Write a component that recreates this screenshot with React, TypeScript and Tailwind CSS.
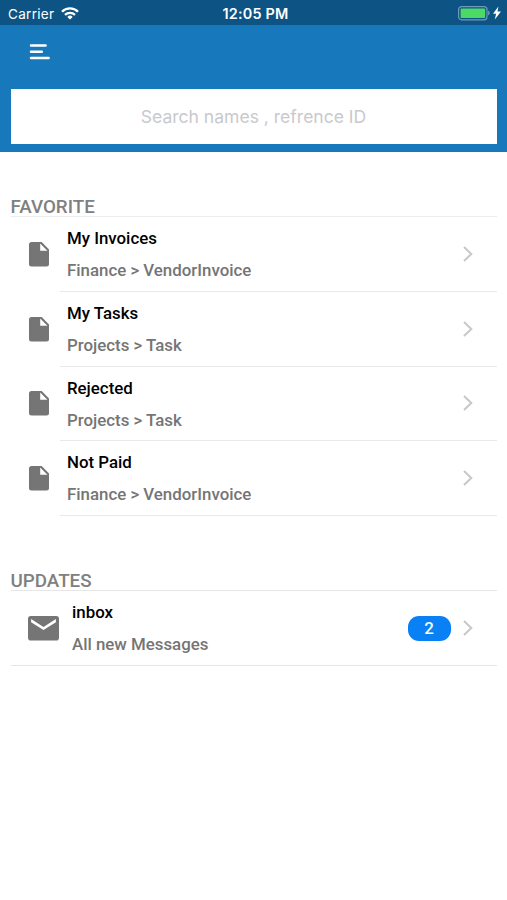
import { FC, ReactNode } from "react";

type Favorite = {
    title: string;
    path: string;
};

const favorites: Favorite[] = [
    { title: "My Invoices", path: "Finance > VendorInvoice" },
    { title: "My Tasks", path: "Projects > Task" },
    { title: "Rejected", path: "Projects > Task" },
    { title: "Not Paid", path: "Finance > VendorInvoice" },
];

const WifiIcon: FC = () => (
    <svg width="18" height="13" viewBox="0 0 18 13" fill="none" stroke="white" strokeWidth="2.3">
        <path d="M1 4.7a11.3 11.3 0 0 1 16 0" />
        <path d="M4 7.9a7.1 7.1 0 0 1 10 0" />
        <path d="M9 12.6 6.3 9.9a3.8 3.8 0 0 1 5.4 0Z" fill="white" stroke="none" />
    </svg>
);

const BatteryIcon: FC = () => (
    <svg width="44" height="15" viewBox="0 0 44 15">
        <rect x="0.6" y="0.6" width="28.4" height="13.2" rx="3" fill="none" stroke="#6f9abb" strokeWidth="1.2" />
        <rect x="2.6" y="2.4" width="24.6" height="9.6" rx="1" fill="#4cd964" />
        <path d="M30.2 4.6v5c2-1 2-4 0-5Z" fill="#7ba3c0" />
        <path d="M40.4 0.4 35 7.8h3.1l-1.3 5.6 6.2-7.8h-3.5Z" fill="white" />
    </svg>
);

const FileIcon: FC = () => (
    <svg width="20" height="25" viewBox="0 0 20 25">
        <path
            fillRule="evenodd"
            fill="#757575"
            d="M2.5 0H12.7L20 7.4V22a2.5 2.5 0 0 1-2.5 2.5h-15A2.5 2.5 0 0 1 0 22V2.5A2.5 2.5 0 0 1 2.5 0ZM11.2 1.6V8.8H18.4Z"
        />
    </svg>
);

const MailIcon: FC = () => (
    <svg width="31" height="25" viewBox="0 0 31 25">
        <rect width="31" height="24.6" rx="2.8" fill="#757575" />
        <path d="M3.1 3.1 15.5 10.9 27.9 3.1V6.2L15.5 14 3.1 6.2Z" fill="white" />
    </svg>
);

const ChevronIcon: FC = () => (
    <svg width="10" height="16" viewBox="0 0 10 16" fill="none" stroke="#c7c7cc" strokeWidth="2">
        <path d="M1 1 8.3 8 1 15" />
    </svg>
);

const SectionTitle: FC<{ children: ReactNode }> = ({ children }) => (
    <h2 className="h-[21px] text-[18.8px] leading-[24px] font-medium text-[#808080]">{children}</h2>
);

const FavoriteRow: FC<Favorite> = ({ title, path }) => (
    <div className="flex h-[74.6px] items-stretch">
        <div className="flex w-[49px] items-center pl-[18px]">
            <FileIcon />
        </div>
        <div className="flex flex-1 items-center justify-between border-b border-[#e9e9e9] pr-6 pl-[7.5px]">
            <div className="pt-[0.4px] leading-8">
                <p className="text-black">{title}</p>
                <p className="text-[#757575]">{path}</p>
            </div>
            <ChevronIcon />
        </div>
    </div>
);

const StatusBar: FC = () => (
    <div className="grid h-[25px] grid-cols-3 items-center bg-[#0d5484] pt-[2px] font-['Inter','Liberation_Sans',sans-serif] text-[13.5px] leading-5 text-white">
        <div className="flex items-center gap-[7px] pl-2">
            <span className="tracking-[0.3px]">Carrier</span>
            <WifiIcon />
        </div>
        <span className="pl-1 text-center text-[14.4px] font-semibold tracking-[0.2px]">12:05 PM</span>
        <div className="flex justify-end pr-[5px]">
            <BatteryIcon />
        </div>
    </div>
);

export default function App() {
    return (
        <div className="h-[900px] w-[507px] overflow-hidden bg-white font-['Roboto','Liberation_Sans',sans-serif] text-[16.85px] font-medium">
            <header className="h-[152px] bg-[#1778bb]">
                <div className="font-normal">
                    <StatusBar />
                </div>
                <div className="h-16 pt-[19px] pl-[29px]">
                    <svg width="21" height="16" viewBox="0 0 21 16" stroke="white" strokeWidth="2.5" strokeLinecap="round">
                        <path d="M2 1.5H16.6M2 7.8H12.8M2 14H19.6" />
                    </svg>
                </div>
                <div className="mx-[10.5px] flex h-[55px] items-center bg-white pt-0.5">
                    <input
                        type="text"
                        placeholder="Search names , refrence ID"
                        className="w-full text-center font-['Inter','Liberation_Sans',sans-serif] text-[17.55px] font-normal outline-none placeholder:text-[#c9c9cd]"
                    />
                </div>
            </header>

            <main className="px-[10.5px] pt-[43.4px]">
                <section>
                    <SectionTitle>FAVORITE</SectionTitle>
                    <div className="border-t border-[#ededed]">
                        {favorites.map((item) => (
                            <FavoriteRow key={item.title} {...item} />
                        ))}
                    </div>
                </section>

                <section className="pt-[53.6px]">
                    <SectionTitle>UPDATES</SectionTitle>
                    <div className="flex h-[75.4px] items-center border-y border-[#e6e6e6] pr-6 pl-[17.5px]">
                        <MailIcon />
                        <div className="flex-1 pl-[13px] leading-8">
                            <p className="text-black">inbox</p>
                            <p className="text-[#757575]">All new Messages</p>
                        </div>
                        <span className="mr-3 flex h-[25px] w-[43px] items-center justify-center rounded-[11px] bg-[#0a80f5] pt-px text-white">
                            2
                        </span>
                        <ChevronIcon />
                    </div>
                </section>
            </main>
        </div>
    );
}
